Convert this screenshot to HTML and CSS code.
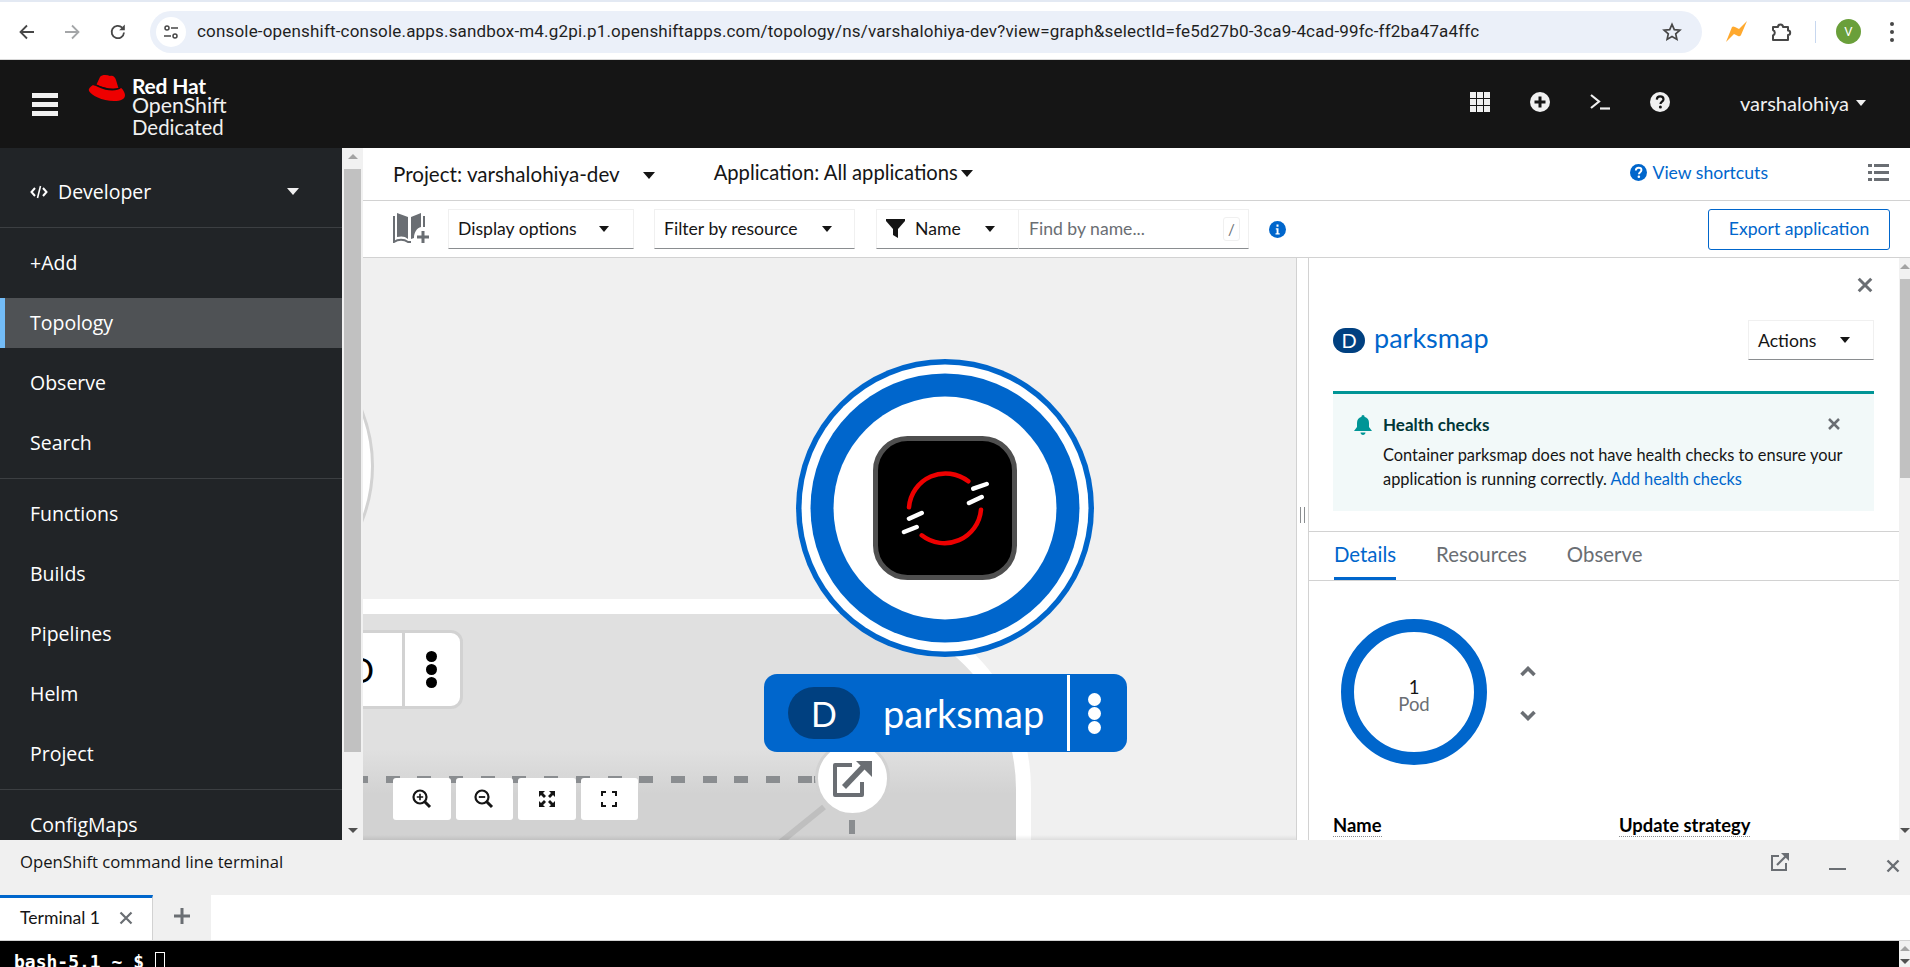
FILE: index.html
```html
<!DOCTYPE html>
<html lang="en">
  <head>
    <meta charset="UTF-8" />
    <meta name="viewport" content="width=device-width, initial-scale=1.0" />
    <title>Topology</title>
    <link rel="stylesheet" href="styles.css">
  </head>
  <body>
    <!-- browser bar -->
    <div class="browser">
      <svg class="b-icon" width="20" height="20" viewBox="0 0 20 20"><path d="M17 10H4M10 3.5 3.5 10l6.5 6.5" fill="none" stroke="#474747" stroke-width="1.8"/></svg>
      <svg class="b-icon fwd" width="20" height="20" viewBox="0 0 20 20"><path d="M3 10h13M10 3.5l6.5 6.5-6.5 6.5" fill="none" stroke="#a4a6a8" stroke-width="1.8"/></svg>
      <svg class="b-icon reload" width="20" height="20" viewBox="0 0 20 20"><path d="M16 10.5A6.2 6.2 0 1 1 14.2 5.6" fill="none" stroke="#474747" stroke-width="1.8"/><path d="M16.8 2.6v5.6h-5.6z" fill="#474747"/></svg>
      <div class="url">
        <span class="site"><svg width="18" height="18" viewBox="0 0 18 18"><circle cx="5" cy="5" r="2" fill="none" stroke="#474747" stroke-width="1.5"/><path d="M9 5h7M2 13h7" stroke="#474747" stroke-width="1.5"/><circle cx="13" cy="13" r="2" fill="none" stroke="#474747" stroke-width="1.5"/></svg></span>
        <span class="url-text">console-openshift-console.apps.sandbox-m4.g2pi.p1.openshiftapps.com/topology/ns/varshalohiya-dev?view=graph&amp;selectId=fe5d27b0-3ca9-4cad-99fc-ff2ba47a4ffc</span>
        <svg class="star" width="20" height="20" viewBox="0 0 20 20"><path d="M10 2.4l2.3 5.2 5.6.6-4.2 3.7 1.2 5.5L10 14.6l-4.9 2.8 1.2-5.5L2.1 8.2l5.6-.6z" fill="none" stroke="#474747" stroke-width="1.7"/></svg>
      </div>
      <svg class="bolt" width="21" height="21" viewBox="0 0 21 21"><path d="M0 21 6 6q1-1 3 0l4 2 8-8-6 14q-1 2-3 1l-4-2z" fill="#ffa92e"/></svg>
      <svg class="puzzle" width="21" height="20" viewBox="0 0 21 20"><path d="M1 5h5a2.500 2.500 0 0 1 5 0h5v3.500a2.200 2.200 0 0 1 0 4.400V18H1v-4.500a3 3 0 0 0 0-5.500z" fill="none" stroke="#474747" stroke-width="2" stroke-linejoin="round"/></svg>
      <span class="b-sep"></span>
      <span class="avatar">V</span>
      <span class="kebab"><i></i><i></i><i></i></span>
    </div>

    <!-- masthead -->
    <header class="masthead">
      <div class="burger"><i></i><i></i><i></i></div>
      <svg class="hat" width="38" height="28" viewBox="0 0 38 28">
        <path d="M12 3C14 .5 19 .8 22 2c3-1 5 1 6 4l2.4 8C25 16 15 14 8.500 10.500z" fill="#e00"/>
        <path d="M8.500 10.500C15 14 25 16 30.400 14l2.600 .3-.5 2.400C26 19 16 17.500 9.500 13.500z" fill="#111"/>
        <path d="M5 11C2 13 0 15 1 17c2 4 13 10 25 10 7 0 11-2 11-6 0-2-2-6-4-7-3 3-13 4-23-1-2-1-4-1.500-5-2z" fill="#e00"/>
      </svg>
      <div class="brand">
        <b>Red Hat</b>
        <span>OpenShift</span>
        <span class="brand-sub">Dedicated</span>
      </div>
      <div class="mast-tools">
        <svg width="20" height="20" viewBox="0 0 20 20" fill="#f0f0f0"><path d="M0 0h6v6H0zM7 0h6v6H7zM14 0h6v6h-6zM0 7h6v6H0zM7 7h6v6H7zM14 7h6v6h-6zM0 14h6v6H0zM7 14h6v6H7zM14 14h6v6h-6z"/></svg>
        <svg width="20" height="20" viewBox="0 0 20 20"><circle cx="10" cy="10" r="10" fill="#f0f0f0"/><path d="M10 4.500v11M4.500 10h11" stroke="#151515" stroke-width="3"/></svg>
        <svg width="20" height="20" viewBox="0 0 20 20"><path d="M1 3l8 6.500L1 16" fill="none" stroke="#f0f0f0" stroke-width="2.200"/><path d="M10 16.500h10" stroke="#f0f0f0" stroke-width="2.200"/></svg>
        <svg width="20" height="20" viewBox="0 0 20 20"><circle cx="10" cy="10" r="10" fill="#f0f0f0"/><path d="M6.800 7.600C6.900 5.500 8.300 4.400 10.200 4.400c2 0 3.300 1.200 3.300 2.800 0 2.300-3 2.500-3 4.800" fill="none" stroke="#151515" stroke-width="2.200"/><circle cx="10.400" cy="15" r="1.500" fill="#151515"/></svg>
      </div>
      <div class="user">varshalohiya<span class="caret light"></span></div>
    </header>

    <div class="workspace">
      <!-- left nav -->
      <nav class="sidebar">
        <div class="perspective">
          <svg width="18" height="14" viewBox="0 0 18 14"><path d="M5 3 1.500 7 5 11M13 3l3.500 4-3.500 4" fill="none" stroke="#fff" stroke-width="2"/><path d="M10.500 1 7.500 13" stroke="#fff" stroke-width="1.600"/></svg>
          <span>Developer</span>
          <span class="caret light"></span>
        </div>
        <div class="nav-group">
          <a class="nav-item">+Add</a>
          <a class="nav-item current">Topology</a>
          <a class="nav-item">Observe</a>
          <a class="nav-item">Search</a>
        </div>
        <div class="nav-group">
          <a class="nav-item">Functions</a>
          <a class="nav-item">Builds</a>
          <a class="nav-item">Pipelines</a>
          <a class="nav-item">Helm</a>
          <a class="nav-item">Project</a>
        </div>
        <div class="nav-group last">
          <a class="nav-item">ConfigMaps</a>
        </div>
      </nav>
      <div class="scroll nav-scroll">
        <span class="arrow up"></span>
        <span class="thumb"></span>
        <span class="arrow down"></span>
      </div>

      <main class="main">
        <div class="project-bar">
          <span class="pick project">Project: varshalohiya-dev<span class="caret project-caret"></span></span>
          <span class="pick app">Application: All applications<span class="caret app-caret"></span></span>
          <a class="shortcuts">
            <svg width="17" height="17" viewBox="0 0 20 20"><circle cx="10" cy="10" r="10" fill="#06c"/><path d="M6.800 7.600C6.900 5.500 8.300 4.400 10.200 4.400c2 0 3.300 1.200 3.300 2.800 0 2.300-3 2.500-3 4.800" fill="none" stroke="#fff" stroke-width="2.200"/><circle cx="10.400" cy="15" r="1.500" fill="#fff"/></svg>
            View shortcuts
          </a>
          <svg class="list-icon" width="21" height="18" viewBox="0 0 21 18" fill="#6a6e73"><path d="M0 1h4v3H0zM6 1h15v3H6zM0 8h4v3H0zM6 8h15v3H6zM0 15h4v3H0zM6 15h15v3H6z"/></svg>
        </div>

        <div class="toolbar">
          <svg class="book" width="37" height="31" viewBox="0 0 37 31"><path d="M4 1l11 4v22c-3-3-7-3-11-2z" fill="#6a6e73"/><path d="M18 5l10-4v14c-4 1-7 5-7 11l-3 1z" fill="#6a6e73"/><path d="M1 4v26c4-3 10-3 14 0h3" fill="none" stroke="#6a6e73" stroke-width="2"/><path d="M31 4v11" fill="none" stroke="#6a6e73" stroke-width="2"/><path d="M30 19v12M24 25h12" stroke="#6a6e73" stroke-width="3"/></svg>
          <div class="select display">Display options<span class="caret"></span></div>
          <div class="select resource">Filter by resource<span class="caret"></span></div>
          <div class="select name-filter">
            <svg width="19" height="19" viewBox="0 0 19 19"><path d="M0 0h19v2l-7 8v9l-5-3v-6L0 2z" fill="#151515"/></svg>
            Name<span class="caret"></span>
          </div>
          <div class="find">Find by name...<span class="slash">/</span></div>
          <svg class="info" width="17" height="17" viewBox="0 0 17 17"><circle cx="8.500" cy="8.500" r="8.500" fill="#06c"/><path d="M6.800 7.300h2.700v5h1.200v1.200H6.500v-1.200h1.100V8.500H6.800zM7.500 3.500h2v2.200h-2z" fill="#fff"/></svg>
          <button class="export">Export application</button>
        </div>

        <div class="content">
          <!-- topology graph -->
          <div class="canvas">
            <div class="node-ghost"></div>
            <div class="group"></div>
            <div class="edge-dots"></div>
            <div class="edge-line"></div>
            <div class="edge-stub"></div>

            <div class="route">
              <svg width="40" height="37" viewBox="0 0 40 37"><path d="M19 5H2v30h27V22" fill="none" stroke="#6a6e73" stroke-width="4" stroke-linejoin="round"/><path d="M11 27 31 6" stroke="#6a6e73" stroke-width="5.500"/><path d="M23 1h16v16z" fill="#6a6e73"/></svg>
            </div>

            <svg class="big-node" width="300" height="300" viewBox="0 0 300 300">
              <circle cx="150" cy="150" r="149" fill="#06c"/>
              <circle cx="150" cy="150" r="143.500" fill="#fff"/>
              <circle cx="150" cy="150" r="134.500" fill="#06c"/>
              <circle cx="150" cy="150" r="111.500" fill="#fff"/>
              <rect x="80.500" y="80.500" width="139" height="139" rx="32" fill="#000" stroke="#4f4f4f" stroke-width="5"/>
              <path d="M114 149.300A36.700 36.700 0 0 1 173.300 123.300M186 151.700A36.700 36.700 0 0 1 126.700 177.300" fill="none" stroke="#e00" stroke-width="4.500" stroke-linecap="round"/>
              <path d="M178.300 130.700 191.700 126M174 145 186.700 139M114 160.700 126.700 155M109 174 121.700 169" fill="none" stroke="#fff" stroke-width="4.500" stroke-linecap="round"/>
            </svg>

            <div class="label-ghost">
              <span class="ghost-d">D</span>
              <span class="ghost-dots"><i></i><i></i><i></i></span>
            </div>

            <div class="label">
              <span class="label-badge">D</span>
              <span class="label-name">parksmap</span>
              <span class="label-dots"><i></i><i></i><i></i></span>
            </div>

            <div class="zoom-tools">
              <button><svg width="20" height="20" viewBox="0 0 20 20"><circle cx="8" cy="8" r="6.500" fill="none" stroke="#151515" stroke-width="2.200"/><path d="M8 4.800v6.400M4.800 8h6.400" stroke="#151515" stroke-width="1.600"/><path d="M12.500 12.500 18 18" stroke="#151515" stroke-width="3"/></svg></button>
              <button><svg width="20" height="20" viewBox="0 0 20 20"><circle cx="8" cy="8" r="6.500" fill="none" stroke="#151515" stroke-width="2.200"/><path d="M4.800 8h6.400" stroke="#151515" stroke-width="1.800"/><path d="M12.500 12.500 18 18" stroke="#151515" stroke-width="3"/></svg></button>
              <button><svg width="18" height="18" viewBox="0 0 18 18" fill="#151515"><path d="M1 1h6L5 3l3 3-2 2-3-3-2 2zM17 1v6l-2-2-3 3-2-2 3-3-2-2zM1 17v-6l2 2 3-3 2 2-3 3 2 2zM17 17h-6l2-2-3-3 2-2 3 3 2-2z"/></svg></button>
              <button><svg width="16" height="16" viewBox="0 0 16 16"><path d="M1 5V1h4M11 1h4v4M15 11v4h-4M5 15H1v-4" fill="none" stroke="#151515" stroke-width="2"/></svg></button>
            </div>
            <div class="canvas-fade"></div>
          </div>

          <div class="splitter"><i></i></div>

          <!-- side panel -->
          <aside class="panel">
            <div class="panel-body">
              <div class="panel-close"><svg width="16" height="16" viewBox="0 0 14 14"><path d="M1.500 1.500l11 11M12.500 1.500l-11 11" stroke="#6a6e73" stroke-width="2.600"/></svg></div>
              <div class="panel-head">
                <span class="res-badge">D</span>
                <a class="res-name">parksmap</a>
                <div class="select actions">Actions<span class="caret"></span></div>
              </div>
              <div class="alert">
                <svg class="bell" width="18" height="20" viewBox="0 0 18 20"><path d="M9 0c1 0 1.500 .8 1.500 1.800C13.500 2.600 15 5 15 8v4l3 4H0l3-4V8c0-3 1.500-5.400 4.500-6.200C7.500 .8 8 0 9 0zM6.500 17.500h5C11.500 19 10.300 20 9 20s-2.500-1-2.500-2.500z" fill="#009596"/></svg>
                <div class="alert-text">
                  <h4>Health checks</h4>
                  <p>Container parksmap does not have health checks to ensure your application is running correctly. <a>Add health checks</a></p>
                </div>
                <svg class="alert-x" width="12" height="12" viewBox="0 0 12 12"><path d="M1 1l10 10M11 1 1 11" stroke="#6a6e73" stroke-width="2.500"/></svg>
              </div>
            </div>
            <div class="tabs">
              <a class="tab active">Details</a>
              <a class="tab">Resources</a>
              <a class="tab">Observe</a>
            </div>
            <div class="panel-body">
              <div class="pods">
                <div class="donut"><b>1</b><span>Pod</span></div>
                <div class="scale">
                  <svg width="16" height="11" viewBox="0 0 16 11"><path d="M1.500 9 8 2.500 14.500 9" fill="none" stroke="#6a6e73" stroke-width="3.600"/></svg>
                  <svg width="16" height="11" viewBox="0 0 16 11"><path d="M1.500 2 8 8.500 14.500 2" fill="none" stroke="#6a6e73" stroke-width="3.600"/></svg>
                </div>
              </div>
              <div class="props">
                <span class="prop"><span>Name</span></span>
                <span class="prop"><span>Update strategy</span></span>
              </div>
            </div>
            <div class="scroll panel-scroll">
              <span class="arrow up"></span>
              <span class="thumb"></span>
              <span class="arrow down"></span>
            </div>
          </aside>
        </div>
      </main>
    </div>

    <!-- terminal drawer -->
    <section class="drawer">
      <div class="drawer-head">
        <span>OpenShift command line terminal</span>
        <svg class="d-ext" width="18" height="18" viewBox="0 0 18 18"><path d="M8 3H1v14h14v-7" fill="none" stroke="#6a6e73" stroke-width="2"/><path d="M6 12 15 3" stroke="#6a6e73" stroke-width="2.200"/><path d="M10 0h8v8z" fill="#6a6e73"/></svg>
        <span class="d-min"></span>
        <svg class="d-x" width="14" height="14" viewBox="0 0 14 14"><path d="M1.500 1.500l11 11M12.500 1.500l-11 11" stroke="#6a6e73" stroke-width="2.400"/></svg>
      </div>
      <div class="term-tabs">
        <div class="term-tab">Terminal 1
          <svg width="14" height="14" viewBox="0 0 14 14"><path d="M1.500 1.500l11 11M12.500 1.500l-11 11" stroke="#6a6e73" stroke-width="2.200"/></svg>
        </div>
        <div class="term-add"><svg width="16" height="16" viewBox="0 0 16 16"><path d="M8 0v16M0 8h16" stroke="#6a6e73" stroke-width="3"/></svg></div>
      </div>
      <div class="term">
        <span class="prompt">bash-5.1 ~ $</span>
        <span class="cursor"></span>
        <div class="scroll term-scroll">
          <span class="arrow up"></span>
          <span class="arrow down"></span>
        </div>
      </div>
    </section>
  </body>
</html>
```

FILE: styles.css
```css
* {
  box-sizing: border-box;
}

html,
body {
  margin: 0;
  height: 100%;
  overflow: hidden;
}

body {
  display: flex;
  flex-direction: column;
  width: 1910px;
  height: 967px;
  font-family: "Lato", "Liberation Sans", sans-serif;
  font-size: 17.600px;
  color: #151515;
  background: #fff;
}

button {
  font: inherit;
  cursor: pointer;
}

.caret {
  display: inline-block;
  width: 0;
  height: 0;
  border-left: 6px solid transparent;
  border-right: 6px solid transparent;
  border-top: 7px solid #151515;
}

.caret.light {
  border-top-color: #f0f0f0;
}

/* browser bar */
.browser {
  height: 60px;
  flex: none;
  display: flex;
  align-items: center;
  padding-top: 2px;
  border-top: 2px solid #e3e9f3;
  border-bottom: 1px solid #d8d8d8;
  background: #fff;
}

.b-icon {
  margin-left: 17px;
  flex: none;
}

.fwd {
  margin-left: 25px;
}

.reload {
  margin-left: 26px;
}

.url {
  margin-left: 22px;
  width: 1552px;
  height: 42px;
  border-radius: 21px;
  background: #ebf0f9;
  display: flex;
  align-items: center;
  padding-left: 6px;
  flex: none;
}

.site {
  width: 30px;
  height: 30px;
  border-radius: 50%;
  background: #fff;
  display: flex;
  align-items: center;
  justify-content: center;
}

.url-text {
  margin: -1px 0 0 11px;
  font-family: "Roboto", "Liberation Sans", sans-serif;
  font-size: 17px;
  letter-spacing: 0.18px;
  color: #1f1f1f;
  white-space: nowrap;
}

.star {
  margin-left: auto;
  margin-right: 20px;
}

.bolt {
  margin-left: 24px;
  flex: none;
}

.puzzle {
  margin-left: 25px;
  flex: none;
}

.b-sep {
  width: 1px;
  height: 22px;
  background: #c7d7ef;
  margin-left: 22px;
}

.avatar {
  margin-left: 20px;
  width: 25px;
  height: 25px;
  border-radius: 50%;
  background: #6a9f3a;
  color: #fff;
  font-family: "Roboto", sans-serif;
  font-size: 13px;
  display: flex;
  align-items: center;
  justify-content: center;
}

.kebab {
  margin-left: 29px;
  display: flex;
  flex-direction: column;
  gap: 4px;
}

.kebab i {
  width: 4px;
  height: 4px;
  border-radius: 50%;
  background: #474747;
}

/* masthead */
.masthead {
  height: 88px;
  flex: none;
  background: #151515;
  color: #f0f0f0;
  display: flex;
  align-items: center;
}

.burger {
  margin-left: 32px;
  width: 26px;
  display: flex;
  flex-direction: column;
  gap: 4px;
}

.burger i {
  height: 5px;
  background: #f0f0f0;
}

.hat {
  margin-left: 30px;
  margin-top: -32px;
  flex: none;
}

.brand {
  margin-left: 6px;
  display: flex;
  flex-direction: column;
  font-size: 21.300px;
  line-height: 21px;
  margin-top: 3px;
}

.brand b {
  font-size: 21px;
  color: #fff;
  letter-spacing: -0.2px;
  position: relative;
  top: 1px;
}

.brand-sub {
  font-size: 20.400px;
  position: relative;
  top: 1px;
}

.mast-tools {
  margin-left: auto;
  display: flex;
  gap: 40px;
  margin-top: -4px;
}

.user {
  margin-left: 70px;
  margin-right: 44px;
  font-size: 20px;
  display: flex;
  align-items: center;
  gap: 7px;
  margin-top: -2px;
}

.user .caret {
  border-left-width: 5px;
  border-right-width: 5px;
  border-top-width: 6px;
}

/* left nav */
.workspace {
  flex: 1;
  min-height: 0;
  display: flex;
}

.sidebar {
  width: 342px;
  flex: none;
  background: #212427;
  color: #fff;
  font-family: "Open Sans", "Liberation Sans", sans-serif;
  font-size: 19.500px;
  overflow: hidden;
}

.perspective {
  height: 80px;
  display: flex;
  align-items: center;
  padding: 8px 43px 0 30px;
  gap: 10px;
  border-bottom: 1px solid #3c3f42;
}

.perspective .caret {
  margin-left: auto;
}

.nav-group {
  padding: 10px 0;
  display: flex;
  flex-direction: column;
  gap: 10px;
  border-bottom: 1px solid #3c3f42;
}

.nav-group.last {
  border-bottom: none;
}

.nav-item {
  height: 50px;
  display: flex;
  align-items: center;
  padding: 0 0 1px 30px;
  flex: none;
}

.nav-item.current {
  background: #4f5255;
  border-left: 5px solid #73bcf7;
  padding-left: 25px;
}

/* scrollbars */
.scroll {
  background: #f1f1f1;
  display: flex;
  flex-direction: column;
  align-items: center;
  flex: none;
}

.scroll .thumb {
  background: #c1c1c1;
  display: block;
}

.arrow {
  width: 0;
  height: 0;
  border-left: 5px solid transparent;
  border-right: 5px solid transparent;
  flex: none;
}

.arrow.up {
  border-bottom: 5px solid #a3a3a3;
}

.arrow.down {
  border-top: 5px solid #505050;
  margin-top: auto;
}

.nav-scroll {
  width: 21px;
  padding: 6px 0 7px;
}

.nav-scroll .thumb {
  width: 17px;
  height: 583px;
  margin-top: 10px;
}

/* main */
.main {
  flex: 1;
  min-width: 0;
  display: flex;
  flex-direction: column;
}

.project-bar {
  height: 53px;
  flex: none;
  border-bottom: 1px solid #d2d2d2;
  display: flex;
  align-items: center;
  padding: 0 21px 0 30px;
}

.pick {
  white-space: nowrap;
}

.project {
  font-size: 20.600px;
  margin-top: -1px;
}

.project-caret {
  margin-left: 23px;
  vertical-align: 3px;
}

.app {
  font-size: 20.200px;
  margin-left: 59px;
  margin-top: -4px;
}

.app-caret {
  margin-left: 3px;
  vertical-align: 3px;
}

.shortcuts {
  margin-left: auto;
  color: #06c;
  display: flex;
  align-items: center;
  gap: 5px;
  margin-right: 100px;
  margin-top: -3px;
}

.list-icon {
  margin-top: -5px;
}

.toolbar {
  height: 57px;
  flex: none;
  border-bottom: 1px solid #d2d2d2;
  display: flex;
  align-items: center;
  padding: 0 20px 0 30px;
}

.book {
  flex: none;
  margin-top: -3px;
}

.select {
  height: 40px;
  border: 1px solid #f0f0f0;
  border-bottom: 1px solid #8a8d90;
  display: flex;
  align-items: center;
  padding: 0 0 1px 9px;
  background: #fff;
  white-space: nowrap;
  position: relative;
}

.select .caret {
  margin-left: auto;
  border-left-width: 5.500px;
  border-right-width: 5.500px;
  border-top-width: 6px;
}

.display {
  width: 186px;
  margin-left: 18px;
  padding-right: 24px;
}

.resource {
  width: 201px;
  margin-left: 20px;
  padding-right: 22px;
}

.name-filter {
  width: 143px;
  margin-left: 21px;
  gap: 10px;
  padding-right: 23px;
}

.find {
  width: 230px;
  height: 40px;
  border: 1px solid #f0f0f0;
  border-left: none;
  border-bottom: 1px solid #8a8d90;
  display: flex;
  align-items: center;
  padding: 0 8px 1px 10px;
  color: #6a6e73;
}

.slash {
  margin-left: auto;
  width: 17px;
  height: 24px;
  border: 1px solid #f0f0f0;
  border-radius: 3px;
  display: flex;
  align-items: center;
  justify-content: center;
  font-size: 15px;
}

.info {
  margin-left: 20px;
}

.export {
  margin-left: auto;
  width: 182px;
  height: 41px;
  background: #fff;
  border: 1px solid #06c;
  border-radius: 3px;
  color: #06c;
  padding: 0 0 2px;
}

/* canvas */
.content {
  flex: 1;
  min-height: 0;
  display: flex;
}

.canvas {
  width: 933px;
  flex: none;
  position: relative;
  overflow: hidden;
  background: #f0f0f0;
}

.node-ghost {
  position: absolute;
  left: -291px;
  top: 57px;
  width: 302px;
  height: 302px;
  border-radius: 50%;
  background: #fff;
  border: 3px solid #d2d2d2;
}

.group {
  position: absolute;
  left: -300px;
  top: 341px;
  width: 968px;
  height: 600px;
  border: 15px solid #fff;
  border-radius: 0 190px 0 0;
  background: linear-gradient(#e0e0e0 0, #e0e0e0 135px, #d2d2d2 180px);
}

.edge-dots {
  position: absolute;
  left: 0;
  top: 518px;
  width: 460px;
  height: 7px;
  background: repeating-linear-gradient(90deg, #8a8d90 0 14px, transparent 14px 31.700px);
  background-position: -9px 0;
}

.edge-line {
  position: absolute;
  left: 404px;
  top: 549px;
  width: 6px;
  height: 60px;
  background: #bfbfbf;
  transform: rotate(51deg);
  transform-origin: 50% 0;
  margin-left: 54px;
}

.edge-stub {
  position: absolute;
  left: 486px;
  top: 562px;
  width: 6px;
  height: 14px;
  background: #8a8d90;
}

.route {
  position: absolute;
  left: 452px;
  top: 483px;
  width: 75px;
  height: 75px;
  border-radius: 50%;
  background: #fff;
  border: 3px solid #d2d2d2;
  display: flex;
  align-items: center;
  justify-content: center;
}

.big-node {
  position: absolute;
  left: 432px;
  top: 100px;
}

.label-ghost {
  position: absolute;
  left: -40px;
  top: 372px;
  width: 140px;
  height: 79px;
  background: #fff;
  border: 3px solid #d2d2d2;
  border-radius: 12px;
  display: flex;
}

.ghost-d {
  width: 79px;
  border-right: 3px solid #d2d2d2;
  font-size: 34px;
  color: #000;
  display: flex;
  align-items: center;
  justify-content: flex-end;
  padding-right: 28px;
}

.ghost-dots,
.label-dots {
  display: flex;
  flex-direction: column;
  align-items: center;
  justify-content: center;
  gap: 2px;
  flex: 1;
}

.ghost-dots {
  padding-right: 3px;
}

.ghost-dots i {
  width: 11px;
  height: 11px;
  border-radius: 50%;
  background: #000;
}

.label {
  position: absolute;
  left: 401px;
  top: 416px;
  width: 363px;
  height: 78px;
  border-radius: 13px;
  background: #06c;
  color: #fff;
  display: flex;
  align-items: center;
}

.label-badge {
  margin-left: 24px;
  width: 72px;
  height: 52px;
  border-radius: 26px;
  background: #004080;
  display: flex;
  align-items: center;
  justify-content: center;
  font-size: 34px;
}

.label-name {
  margin-left: 23px;
  font-size: 38px;
}

.label-dots {
  margin-left: auto;
  flex: none;
  width: 60px;
  height: 76px;
  border-left: 3px solid #fff;
  gap: 1px;
  padding-right: 9px;
}

.label-dots i {
  width: 13px;
  height: 13px;
  border-radius: 50%;
  background: #fff;
}

.zoom-tools {
  position: absolute;
  left: 30px;
  top: 520px;
  display: flex;
  gap: 5px;
}

.zoom-tools button {
  width: 57.500px;
  height: 42px;
  padding: 0;
  border: none;
  border-radius: 3px;
  background: #fff;
  display: flex;
  align-items: center;
  justify-content: center;
}

.canvas-fade {
  position: absolute;
  left: 0;
  right: 0;
  bottom: 0;
  height: 5px;
  background: linear-gradient(transparent, rgba(0, 0, 0, 0.08));
}

/* side panel */
.splitter {
  width: 13px;
  flex: none;
  background: #fff;
  border-left: 1px solid #d2d2d2;
  border-right: 1px solid #d2d2d2;
  display: flex;
  align-items: center;
  justify-content: center;
}

.splitter i {
  width: 5px;
  height: 16px;
  border-left: 1px solid #8a8d90;
  border-right: 1px solid #8a8d90;
  position: relative;
  top: -34px;
}

.panel {
  flex: 1;
  min-width: 0;
  position: relative;
  overflow: hidden;
  background: #fff;
  padding-right: 11px;
}

.panel-body {
  padding: 0 25px 0 24px;
}

.panel-close {
  height: 62px;
  display: flex;
  justify-content: flex-end;
  align-items: flex-end;
  padding: 0 1px 27px 0;
}

.panel-head {
  height: 40px;
  display: flex;
  align-items: center;
}

.res-badge {
  width: 32px;
  height: 25px;
  border-radius: 13px;
  background: #004080;
  color: #fff;
  font-size: 20px;
  display: flex;
  align-items: center;
  justify-content: center;
}

.res-name {
  margin-left: 9px;
  color: #06c;
  font-size: 27px;
  margin-top: -6px;
}

.actions {
  margin-left: auto;
  width: 126px;
  padding-right: 23px;
  padding-bottom: 0;
}

.alert {
  margin-top: 31px;
  height: 120px;
  border-top: 3px solid #009596;
  background: #f2f9f9;
  display: flex;
  padding: 21px 25px 0 21px;
  position: relative;
}

.bell {
  flex: none;
}

.alert-text {
  margin-left: 11px;
  flex: 1;
}

.alert-text h4 {
  margin: 0;
  font-size: 17px;
  line-height: 20px;
  color: #003737;
  font-weight: 700;
}

.alert-text p {
  margin: 8px 0 0;
  font-size: 16.400px;
  line-height: 24px;
}

.alert-text a,
.tab.active {
  color: #06c;
}

.alert-x {
  position: absolute;
  right: 34px;
  top: 24px;
}

.tabs {
  margin-top: 20px;
  height: 50px;
  border-top: 1px solid #d2d2d2;
  border-bottom: 1px solid #d2d2d2;
  display: flex;
  padding-left: 25px;
  gap: 40px;
  color: #6a6e73;
  font-size: 20.400px;
}

.tab {
  height: 48px;
  padding-bottom: 1px;
  display: flex;
  align-items: center;
  border-bottom: 3px solid transparent;
}

.tab.active {
  border-bottom-color: #06c;
}

.pods {
  display: flex;
  align-items: center;
  padding: 38px 0 0 8px;
}

.donut {
  width: 146px;
  height: 146px;
  border-radius: 50%;
  border: 13px solid #06c;
  display: flex;
  flex-direction: column;
  align-items: center;
  justify-content: center;
  font-size: 18.500px;
  line-height: 17px;
  padding-top: 8px;
}

.donut b {
  font-weight: 400;
}

.donut span {
  color: #6a6e73;
}

.scale {
  margin: 2px 0 0 33px;
  display: flex;
  flex-direction: column;
  gap: 33px;
}

.props {
  margin-top: 50px;
  display: grid;
  grid-template-columns: 286px 1fr;
  font-weight: 700;
  font-size: 18.400px;
  line-height: 21px;
  color: #000;
}

.prop span {
  display: inline-block;
  border-bottom: 1px dotted #8a8d90;
}

.panel-scroll {
  position: absolute;
  right: 0;
  top: 0;
  bottom: 0;
  width: 11px;
  padding: 6px 0 7px;
}

.panel-scroll .thumb {
  width: 10px;
  height: 199px;
  margin: 10px 0 0 1px;
}

/* terminal drawer */
.drawer {
  height: 127px;
  flex: none;
  display: flex;
  flex-direction: column;
}

.drawer-head {
  height: 55px;
  flex: none;
  background: #f0f0f0;
  display: flex;
  align-items: center;
  padding: 0 10px 12px 20px;
  font-family: "Open Sans", "Liberation Sans", sans-serif;
  font-size: 16.700px;
}

.d-ext {
  margin-left: auto;
}

.d-min {
  width: 17px;
  height: 2px;
  background: #6a6e73;
  margin: 14px 0 0 40px;
}

.d-x {
  margin: 8px 0 0 40px;
}

.term-tabs {
  height: 46px;
  flex: none;
  display: flex;
  border-bottom: 1px solid #d2d2d2;
}

.term-tab {
  width: 153px;
  border-top: 3px solid #06c;
  border-right: 1px solid #d2d2d2;
  display: flex;
  align-items: center;
  padding: 0 0 3px 20px;
  gap: 19px;
}

.term-add {
  width: 58px;
  background: #f0f0f0;
  display: flex;
  align-items: center;
  justify-content: center;
  padding-bottom: 3px;
}

.term {
  flex: 1;
  background: #000;
  color: #fff;
  font-family: "DejaVu Sans Mono", "Liberation Mono", monospace;
  font-size: 18px;
  line-height: 21px;
  font-weight: 700;
  padding: 10px 0 0 14px;
  position: relative;
  overflow: hidden;
}

.prompt {
  white-space: pre;
}

.cursor {
  display: inline-block;
  width: 10px;
  height: 20px;
  border: 1px solid #fff;
  vertical-align: -4px;
}

.term-scroll {
  position: absolute;
  right: 0;
  top: 0;
  bottom: 0;
  width: 11px;
  padding-top: 5px;
}

.term-scroll .arrow.down {
  margin-top: 8px;
}
```
